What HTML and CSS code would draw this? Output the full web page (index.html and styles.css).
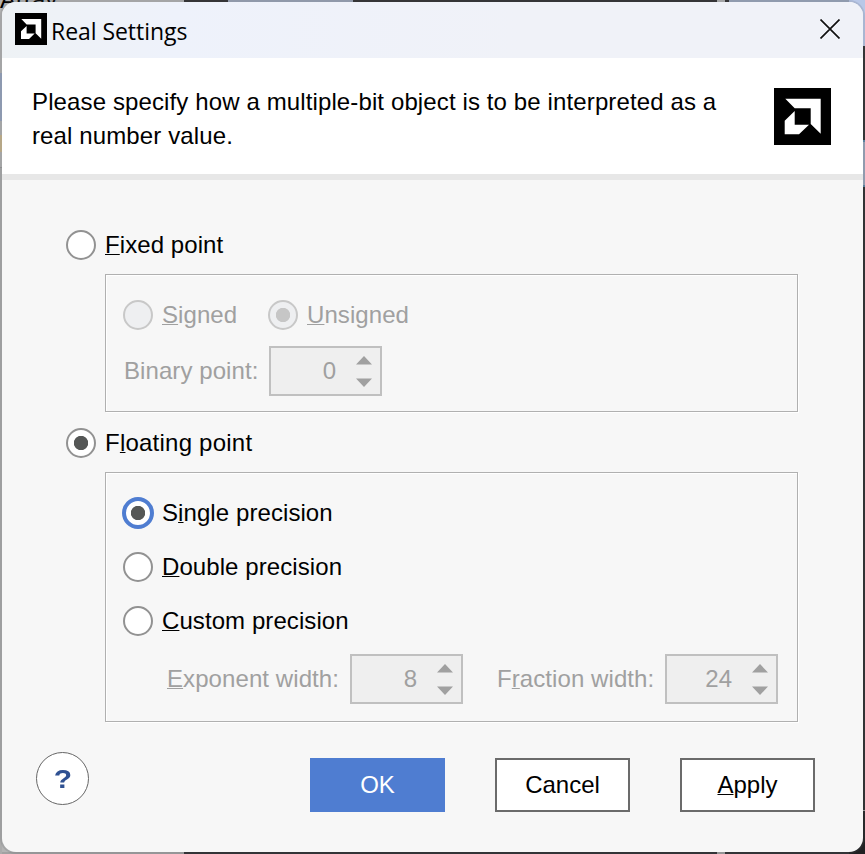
FILE: index.html
```html
<!DOCTYPE html>
<html lang="en">
<head>
<meta charset="utf-8">
<title>Real Settings</title>
<link rel="stylesheet" href="styles.css">
</head>
<body>
<div class="backdrop-text">Array</div>
<div class="edge edge-left"></div>
<div class="edge edge-right"></div>
<main class="dialog">
  <header class="titlebar">
    <svg class="app-icon" viewBox="0 0 57 57" width="32" height="32"><rect width="57" height="57"/><g class="mark soft"><path d="M11.3 10.7H46.7V45.7L36.7 36V20.3H20.7Z"/><path d="M20.7 23L10.7 32.7V46.3H25L35 36.7H20.7Z"/></g></svg>
    <h1>Real Settings</h1>
    <svg class="close" viewBox="0 0 20 20" width="20" height="20"><path d="M.5.5l19 19M19.5.5l-19 19"/></svg>
  </header>
  <section class="intro">
    <p>Please specify how a multiple-bit object is to be interpreted as a<br>real number value.</p>
    <svg viewBox="0 0 57 57" width="57" height="57"><rect width="57" height="57"/><g class="mark"><path d="M11.3 10.7H46.7V45.7L36.7 36V20.3H20.7Z"/><path d="M20.7 23L10.7 32.7V46.3H25L35 36.7H20.7Z"/></g></svg>
  </section>
  <section class="content">
    <div class="option"><span class="radio"></span><span><u>F</u>ixed point</span></div>
    <div class="group fixed disabled">
      <div class="sign-row">
        <div class="option signed"><span class="radio"></span><span><u>S</u>igned</span></div>
        <div class="option"><span class="radio checked"></span><span><u>U</u>nsigned</span></div>
      </div>
      <div class="field binary"><span>Binary point:</span>
        <div class="spinner"><span>0</span><svg width="16" height="32"><path d="M0 9.5L8 1L16 9.5ZM0 23.5H16L8 32Z"/></svg></div>
      </div>
    </div>
    <div class="option wide"><span class="radio checked"></span><span>F<u>l</u>oating point</span></div>
    <div class="group floating">
      <div class="option"><span class="radio checked focused"></span><span>S<u>i</u>ngle precision</span></div>
      <div class="option"><span class="radio"></span><span><u>D</u>ouble precision</span></div>
      <div class="option"><span class="radio"></span><span><u>C</u>ustom precision</span></div>
      <div class="width-row disabled">
        <div class="field exponent"><span><u>E</u>xponent width:</span>
          <div class="spinner"><span>8</span><svg width="16" height="32"><path d="M0 9.5L8 1L16 9.5ZM0 23.5H16L8 32Z"/></svg></div>
        </div>
        <div class="field fraction"><span>F<u>r</u>action width:</span>
          <div class="spinner"><span>24</span><svg width="16" height="32"><path d="M0 9.5L8 1L16 9.5ZM0 23.5H16L8 32Z"/></svg></div>
        </div>
      </div>
    </div>
  </section>
  <footer>
    <div class="help"><span>?</span></div>
    <div class="button primary">OK</div>
    <div class="button">Cancel</div>
    <div class="button"><span><u>A</u>pply</span></div>
  </footer>
</main>
</body>
</html>
```
FILE: styles.css
```css
* { box-sizing: border-box; }
body {
  margin: 0;
  width: 865px;
  height: 854px;
  padding: 2px;
  overflow: hidden;
  position: relative;
  font: 24px/30px "Liberation Sans", Arial, sans-serif;
  color: #000;
  background:
    linear-gradient(90deg, #b4b4b4 184px, #302f30 184px 228px, #9ca5b8 228px 353px, #302f30 353px 717px, #b4b4b4 717px 725px, #302f30 725px 729px, #9ca8bd 729px) top / 100% 2px no-repeat,
    linear-gradient(90deg, #a2a2a2 184px, #2e2e30 184px 717px, #a0a0a0 717px 725px, #2e2e30 725px) bottom / 100% 2px no-repeat,
    linear-gradient(90deg, #b4b4b4 50%, #2c2c2e 50%);
}
svg { display: block; flex: none; }
.backdrop-text {
  position: absolute;
  left: 0;
  top: -14px;
  font-size: 24px;
  line-height: 27px;
}
.edge { position: absolute; top: 0; width: 16px; height: 854px; }
.edge-left {
  left: 0;
  width: 2px;
  background: linear-gradient(transparent 73px, #98a5bf 73px 121px, #b4b4b4 121px 135px, #c9b68f 135px 152px, #b4b4b4 152px 167px, #999 167px 168px, #acacac 168px);
}
.edge-right {
  right: 0;
  background: linear-gradient(#b9c8e8 46px, #302f30 46px 140px, #5b88a8 140px 142px, #9ca8bd 142px 185px, #5b88a8 185px 187px, #2c2c2e 187px 810px, #a0a0a0 810px 811px, #202022 811px);
}
.dialog {
  position: relative;
  width: 861px;
  height: 850px;
  display: flex;
  flex-direction: column;
  background: #f7f7f7;
  border-radius: 14px;
  overflow: hidden;
  box-shadow: 0 0 0 2px #50586028;
}
.titlebar {
  height: 56px;
  flex: none;
  display: flex;
  align-items: center;
  padding: 0 23px 2px 13px;
  background: linear-gradient(90deg, #eef2f5, #eef2fb 20%, #f0f2f8 60%);
}
.mark { fill: #fff; }
.soft { filter: blur(1.3px); }
h1 {
  margin: 3px auto 0 4px;
  font: 400 23px/32px "Open Sans", "Noto Sans", sans-serif;
  letter-spacing: -.05px;
  white-space: nowrap;
}
.close { fill: none; stroke: #111; stroke-width: 1.7; }
.intro {
  height: 122px;
  flex: none;
  display: flex;
  justify-content: space-between;
  align-items: flex-start;
  padding: 30px 32px 0 30px;
  background: #fff;
  border-bottom: 6px solid #e7e7e7;
}
.intro p { margin: -3px 0 0; line-height: 34px; letter-spacing: .12px; white-space: nowrap; }
.content { padding: 50px 65px 0 64px; letter-spacing: .08px; }
.option { display: flex; align-items: center; height: 30px; gap: 9px; white-space: nowrap; }
.wide { letter-spacing: .23px; }
u { text-decoration: underline; text-decoration-thickness: 1px; text-underline-offset: 1px; text-decoration-skip-ink: none; }
.radio {
  width: 30px;
  height: 30px;
  flex: none;
  border: 2px solid #929292;
  border-radius: 50%;
  background: #fff;
}
.radio.checked { background: radial-gradient(circle, #555756 6.8px, #fff 7.5px); }
.radio.focused { border-color: #4f7dd1; border-width: 4px; width: 32px; height: 32px; margin: 0 -1px; }
.disabled { color: #a0a0a0; }
.disabled .radio { border-color: #c8c8c8; background: #eeeff1; }
.disabled .radio.checked { background: radial-gradient(circle, #c6c6c6 6.8px, #eeeff1 7.5px); }
.group {
  margin-left: 39px;
  width: 693px;
  border: 1px solid #b0b0b0;
  box-shadow: 1px 1px #fff, inset 1px 1px #fff;
}
.fixed { height: 138px; margin-top: 14px; margin-bottom: 16px; padding: 25px 17px 0; }
.sign-row { display: flex; }
.signed { width: 145px; }
.field { display: flex; align-items: center; justify-content: space-between; height: 50px; white-space: nowrap; }
.binary { width: 258px; margin: 16px 0 0 1px; }
.spinner {
  width: 113px;
  height: 50px;
  border: 2px solid #c0c0c0;
  background: #efefef;
  display: flex;
  align-items: center;
  justify-content: flex-end;
  gap: 20px;
  padding-right: 8px;
  letter-spacing: 0;
}
.spinner svg { fill: #a0a0a0; }
.floating { height: 250px; margin-top: 14px; padding: 25px 17px 0; display: flex; flex-direction: column; gap: 24px; }
.width-row { display: flex; justify-content: space-between; margin: -6px 2px 0 44px; }
.exponent { width: 296px; }
.fraction { width: 281px; }
footer { display: flex; margin: 30px 48px 0 34px; gap: 50px; }
.help {
  width: 53px;
  height: 53px;
  margin: 0 171px 0 0;
  border: 1px solid #666;
  border-radius: 50%;
  background: #fff;
  display: flex;
  align-items: center;
  justify-content: center;
  color: #2f5192;
  font-size: 26px;
  font-weight: 700;
}
.help span { transform: scaleX(1.15); }
.button {
  width: 135px;
  height: 54px;
  margin-top: 6px;
  display: flex;
  align-items: center;
  justify-content: center;
  border: 2px solid #6b6b6b;
  background: #fff;
}
.primary { background: #4f7dd1; border-color: #4f7dd1; color: #fff; }
```
